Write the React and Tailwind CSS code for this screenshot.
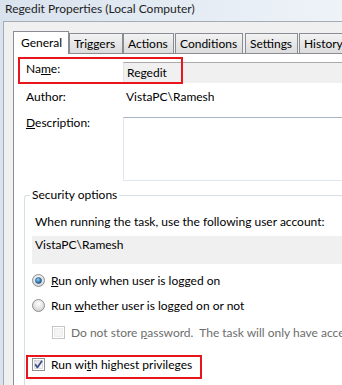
import React from "react";

const Radio = ({ checked }) => (
  <svg width="13" height="13" viewBox="0 0 13 13" className="shrink-0">
    <defs>
      <radialGradient id={checked ? "rb1" : "rb0"} cx="50%" cy="35%" r="60%">
        <stop offset="0" stopColor="#ffffff" />
        <stop offset="1" stopColor="#d4d4d4" />
      </radialGradient>
      <radialGradient id="rdot" cx="40%" cy="35%" r="60%">
        <stop offset="0" stopColor="#8fd3f5" />
        <stop offset="1" stopColor="#1b5e9e" />
      </radialGradient>
    </defs>
    <circle cx="6.5" cy="6.5" r="6" fill={`url(#${checked ? "rb1" : "rb0"})`} stroke="#8e8f8f" />
    {checked && <circle cx="6.5" cy="6.5" r="3" fill="url(#rdot)" stroke="#1d4f82" strokeWidth="0.6" />}
  </svg>
);

const Check = ({ checked, disabled }) => (
  <svg width="13" height="13" viewBox="0 0 13 13" className="shrink-0">
    <defs>
      <linearGradient id={disabled ? "cbd" : "cbn"} x1="0" y1="0" x2="1" y2="1">
        <stop offset="0" stopColor={disabled ? "#f4f4f4" : "#dcdcdc"} />
        <stop offset="1" stopColor={disabled ? "#f4f4f4" : "#fbfbfb"} />
      </linearGradient>
    </defs>
    <rect x="0.5" y="0.5" width="12" height="12" fill="#fff" stroke={disabled ? "#c6c6c6" : "#8e8f8f"} />
    <rect x="2.5" y="2.5" width="8" height="8" fill={`url(#${disabled ? "cbd" : "cbn"})`} stroke={disabled ? "#e4e4e4" : "#c9c9c9"} strokeWidth="0.6" />
    {checked && (
      <path d="M3.2 6.2 L5.4 9.4 L10 2.8" fill="none" stroke="#3b4d8f" strokeWidth="1.7" strokeLinejoin="round" />
    )}
  </svg>
);

const tabs = [
  { label: "Triggers", cls: "w-[54px] ml-0" },
  { label: "Actions", cls: "w-[51px] ml-0" },
  { label: "Conditions", cls: "w-[68px] ml-[1px]" },
  { label: "Settings", cls: "w-[53px] ml-[2px]" },
  { label: "History", cls: "w-[50px] ml-[1px]" },
];

export default function App() {
  return (
    <div
      className="w-[342px] h-[385px] overflow-hidden flex flex-col bg-gradient-to-r from-[#d9e3ee] to-[#eef3f8] text-[12px] text-black"
      style={{ fontFamily: "'Segoe UI', Lato, 'Noto Sans', sans-serif" }}
    >
      {/* title bar */}
      <div className="h-[21px] pl-[5px] pt-[1px] text-[12px] text-[#1e1e1e] leading-[15px] shrink-0 whitespace-nowrap">
        Regedit Properties (Local Computer)
      </div>

      {/* client area */}
      <div className="flex-1 min-w-0 ml-[3px] border-t border-l border-[#a5acb5] bg-[#f0f0f0] pl-[9px] pt-[9px] flex flex-col">
        {/* tabs */}
        <div className="flex items-end h-[22px] relative z-10 leading-[15px]">
          <div className="w-[56px] h-[23px] -mb-px bg-white border border-b-0 border-[#898c95] pl-[7px] pt-[3px] shrink-0">
            General
          </div>
          {tabs.map((t) => (
            <div
              key={t.label}
              className={`${t.cls} h-[20px] bg-gradient-to-b from-[#f3f3f3] to-[#dcdcdc] border border-b-0 border-[#898c95] pl-[4px] pt-[2px] whitespace-nowrap shrink-0 overflow-hidden`}
            >
              {t.label}
            </div>
          ))}
        </div>

        {/* tab panel */}
        <div className="flex-1 min-w-0 relative overflow-hidden bg-white border-t border-l border-[#898c95] pl-[12px] pt-[8px] leading-[15px]">
          {/* name */}
          <div className="flex items-start h-[21px]">
            <div className="w-[97px] -mt-px">
              Na<span className="underline">m</span>e:
            </div>
            <div className="flex-1 h-[21px] bg-[#f0f0f0] border-t border-l border-t-[#a9a9a9] border-l-[#e2e2e2] pl-[3px] pt-[2px]">
              Regedit
            </div>
          </div>
          {/* author */}
          <div className="flex mt-[6px]">
            <div className="w-[97px]">Author:</div>
            <div className="pl-[3px]">VistaPC\Ramesh</div>
          </div>
          {/* description */}
          <div className="flex mt-[11px]">
            <div className="w-[97px]">
              <span className="underline">D</span>escription:
            </div>
            <div className="flex-1 mt-[2px] h-[64px] border border-r-0 border-[#dfe6ee] border-t-[#a8b4c2]" />
          </div>

          {/* security options group */}
          <div className="mt-[14px] ml-[-2px] border-t border-l border-[#d5dfe5] rounded-tl-[3px] pl-[9px] relative h-[200px]">
            <div className="absolute -top-[9px] left-[5px] bg-white px-[2px]">Security options</div>
            <div className="pt-[18px] pl-[1px] whitespace-nowrap">When running the task, use the following user account:</div>
            <div className="mt-[7px] ml-[-2px] h-[28px] bg-[#f0f0f0] pl-[3px] pt-[1px]">VistaPC\Ramesh</div>

            <div className="flex items-center gap-[6px] mt-[9px] ml-[-2px]">
              <Radio checked />
              <span>
                <span className="underline">R</span>un only when user is logged on
              </span>
            </div>
            <div className="flex items-center gap-[6px] mt-[10px] ml-[-2px]">
              <Radio />
              <span>
                Run <span className="underline">w</span>hether user is logged on or not
              </span>
            </div>
            <div className="flex items-center gap-[6px] mt-[12px] ml-[18px] text-[#6d6d6d] whitespace-nowrap">
              <Check disabled />
              <span>
                Do not store <span className="underline">p</span>assword.&nbsp; The task will only have access to local
                computer resources.
              </span>
            </div>
            <div className="flex items-center gap-[6px] mt-[17px] ml-[-2px]">
              <Check checked />
              <span>
                Run wi<span className="underline">t</span>h highest privileges
              </span>
            </div>
          </div>

          {/* highlight boxes */}
          <div className="absolute left-[4px] top-[3px] w-[165px] h-[27px] border-[2.5px] border-[#e8161c] pointer-events-none" />
          <div className="absolute left-[12px] top-[301px] w-[176px] h-[24px] border-[2.5px] border-[#e8161c] pointer-events-none" />
        </div>
      </div>
    </div>
  );
}
